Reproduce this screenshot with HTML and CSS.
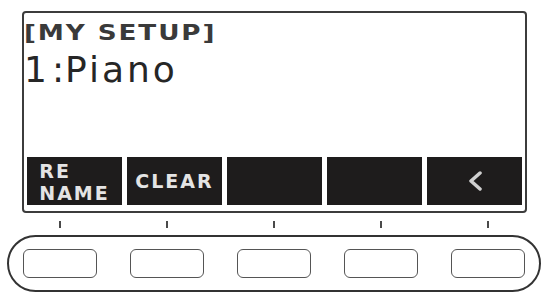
FILE: index.html
```html
<!DOCTYPE html>
<html>
<head>
<meta charset="utf-8">
<link rel="stylesheet" href="styles.css">
</head>
<body>
<div class="device">
  <div class="screen">
    <div class="title"><span class="wide">[MY SETUP]</span></div>
    <div class="name"><span class="num">1</span><span class="colon">:</span><span class="tone">Piano</span></div>
    <div class="softkeys">
      <div class="key"><div class="label two"><div class="ln">RE</div><div class="ln">NAME</div></div></div>
      <div class="key"><div class="label">CLEAR</div></div>
      <div class="key"></div>
      <div class="key"></div>
      <div class="key">
        <svg class="chev" width="16" height="20" viewBox="0 0 16 20"><polyline points="13,2 4,10 13,18" fill="none" stroke="#d0d0d0" stroke-width="3.5" stroke-linejoin="round" stroke-linecap="round"/></svg>
      </div>
    </div>
  </div>
  <div class="ticks">
    <div class="tcell"><span class="tick"></span></div>
    <div class="tcell"><span class="tick"></span></div>
    <div class="tcell"><span class="tick"></span></div>
    <div class="tcell"><span class="tick"></span></div>
    <div class="tcell"><span class="tick"></span></div>
  </div>
  <div class="panel">
    <div class="btn"></div>
    <div class="btn"></div>
    <div class="btn"></div>
    <div class="btn"></div>
    <div class="btn"></div>
  </div>
</div>
</body>
</html>
```
FILE: styles.css
```css
html, body {
  margin: 0;
  padding: 0;
  background: #ffffff;
}
.device {
  padding-top: 11px;
  width: 542px;
  height: 295px;
  box-sizing: border-box;
}
.screen {
  margin-left: 22px;
  width: 505px;
  height: 202px;
  box-sizing: border-box;
  border: 2px solid #3c3c3c;
  border-radius: 4px;
  display: flex;
  flex-direction: column;
}
.title {
  margin-top: 10px;
  height: 21px;
  line-height: 21px;
  font-family: "DejaVu Sans", sans-serif;
  font-weight: bold;
  font-size: 21px;
  color: #3a3a3a;
  white-space: nowrap;
}
.wide {
  display: inline-block;
  transform: scaleX(1.25);
  transform-origin: 0 50%;
  letter-spacing: 1.5px;
}
.name {
  margin-top: 6px;
  height: 40px;
  line-height: 40px;
  font-family: "DejaVu Sans", sans-serif;
  font-size: 36px;
  color: #262626;
  white-space: nowrap;
}
.colon {
  margin-left: 5px;
}
.tone {
  margin-left: 1px;
  letter-spacing: 3px;
}
.softkeys {
  margin-top: auto;
  padding: 0 3px 6px 3px;
  display: grid;
  grid-template-columns: repeat(5, 1fr);
  column-gap: 5px;
}
.key {
  height: 48px;
  background: #1e1c1c;
  display: flex;
  align-items: center;
  justify-content: center;
}
.label {
  font-family: "DejaVu Sans", sans-serif;
  font-weight: bold;
  font-size: 19px;
  line-height: 22px;
  letter-spacing: 2px;
  color: #e4e4e4;
  text-align: left;
}
.label.two {
  margin-top: 2px;
}
.ln {
  height: 22px;
  line-height: 22px;
}
.chev {
  display: block;
}
.ticks {
  margin-left: 23px;
  margin-top: 8px;
  width: 502px;
  height: 7px;
  display: flex;
  justify-content: space-between;
}
.tcell {
  width: 74px;
  display: flex;
  justify-content: center;
}
.tick {
  width: 2px;
  height: 7px;
  background: #4a4a4a;
}
.panel {
  margin-left: 7px;
  margin-top: 7px;
  width: 534px;
  height: 57px;
  box-sizing: border-box;
  border: 2px solid #333333;
  border-radius: 29px;
  padding: 12px 14px;
  display: flex;
  justify-content: space-between;
}
.btn {
  width: 74px;
  height: 29px;
  box-sizing: border-box;
  border: 1.5px solid #555555;
  border-radius: 6px;
}
```
